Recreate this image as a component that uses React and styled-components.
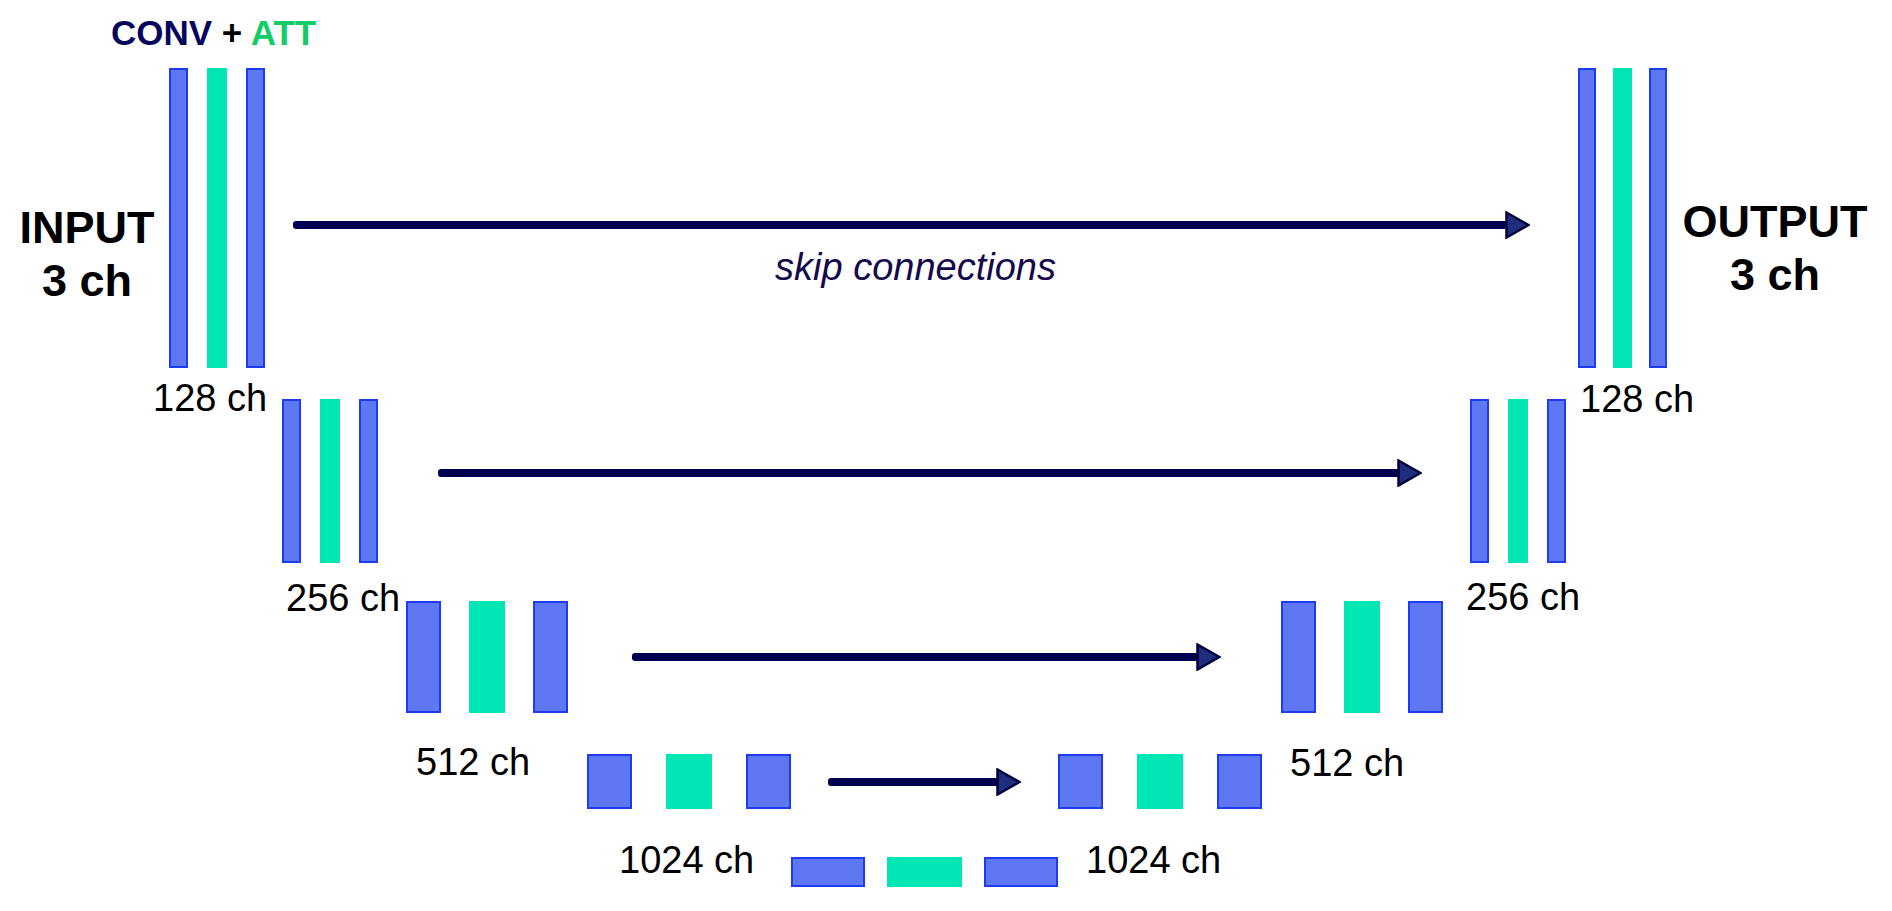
import React from "react";
import styled, { createGlobalStyle } from "styled-components";

const GlobalStyle = createGlobalStyle`
  html, body { margin: 0; padding: 0; background: #ffffff; }
  #root { width: 1892px; height: 911px; }
`;

const Canvas = styled.div`
  position: relative;
  width: 1892px;
  height: 911px;
  background: #ffffff;
  overflow: hidden;
  font-family: "Liberation Sans", Arial, sans-serif;
  color: #000;
`;

/* Diagram nodes: their place on the canvas is the content itself */
const Node = styled.div`
  position: absolute;
  left: ${(p) => p.$x}px;
  top: ${(p) => p.$y}px;
`;

const BarGroup = styled(Node)`
  display: flex;
  flex-direction: row;
  gap: ${(p) => p.$gap}px;
  height: ${(p) => p.$h}px;
`;

const Bar = styled.div`
  box-sizing: border-box;
  width: ${(p) => p.$w}px;
  height: 100%;
  background: ${(p) => (p.$att ? "#00e6b4" : "#5d78f2")};
  border: ${(p) => (p.$att ? "none" : "2px solid #1d3cf0")};
`;

const ArrowNode = styled(Node)`
  display: flex;
  flex-direction: row;
  align-items: center;
  width: ${(p) => p.$w}px;
  height: 28px;
`;

const Shaft = styled.div`
  flex: 1;
  height: 8px;
  background: #000050;
  border-radius: 3px;
  margin-right: -3px;
`;

const Head = styled.svg`
  display: block;
  width: 25px;
  height: 28px;
  flex: none;
`;

const ChLabel = styled(Node)`
  font-size: 38px;
  line-height: 38px;
  white-space: nowrap;
`;

const IOLabel = styled(Node)`
  width: ${(p) => p.$w}px;
  font-size: 45px;
  font-weight: 700;
  line-height: 53px;
  text-align: center;
  white-space: nowrap;
`;

const Legend = styled(Node)`
  font-size: 35px;
  font-weight: 700;
  line-height: 40px;
  white-space: nowrap;
`;

const Conv = styled.span`
  color: #06065e;
`;

const Att = styled.span`
  color: #12cc66;
`;

const SkipText = styled(Node)`
  font-size: 38px;
  font-style: italic;
  line-height: 38px;
  color: #150a4c;
  white-space: nowrap;
`;

const groups = [
  { x: 169, y: 68, w: 19, gap: 19, h: 300 },
  { x: 1578, y: 68, w: 18, gap: 17, h: 300 },
  { x: 282, y: 399, w: 19, gap: 19, h: 164 },
  { x: 1470, y: 399, w: 19, gap: 19, h: 164 },
  { x: 406, y: 601, w: 35, gap: 28, h: 112 },
  { x: 1281, y: 601, w: 35, gap: 28, h: 112 },
  { x: 587, y: 754, w: 45, gap: 34, h: 55 },
  { x: 1058, y: 754, w: 45, gap: 34, h: 55 },
  { x: 791, y: 857, w: 74, gap: 22, h: 30 },
];

const arrows = [
  { x1: 293, x2: 1530, y: 225 },
  { x1: 438, x2: 1422, y: 473 },
  { x1: 632, x2: 1221, y: 657 },
  { x1: 828, x2: 1021, y: 782 },
];

const labels = [
  { x: 153, y: 379, t: "128 ch" },
  { x: 1580, y: 380, t: "128 ch" },
  { x: 286, y: 579, t: "256 ch" },
  { x: 1466, y: 578, t: "256 ch" },
  { x: 416, y: 743, t: "512 ch" },
  { x: 1290, y: 744, t: "512 ch" },
  { x: 619, y: 841, t: "1024 ch" },
  { x: 1086, y: 841, t: "1024 ch" },
];

function Block({ g }) {
  return (
    <BarGroup $x={g.x} $y={g.y} $gap={g.gap} $h={g.h}>
      <Bar $w={g.w} />
      <Bar $w={g.w + 1} $att />
      <Bar $w={g.w} />
    </BarGroup>
  );
}

function Arrow({ a }) {
  return (
    <ArrowNode $x={a.x1} $y={a.y - 14} $w={a.x2 - a.x1}>
      <Shaft />
      <Head viewBox="0 0 25 28">
        <polygon
          points="1.5,1.5 23.5,14 1.5,26.5"
          fill="#1e2e7c"
          stroke="#00003c"
          strokeWidth="2.5"
          strokeLinejoin="miter"
        />
      </Head>
    </ArrowNode>
  );
}

export default function App() {
  return (
    <>
      <GlobalStyle />
      <Canvas>
        <Legend $x={111} $y={13}>
          <Conv>CONV</Conv> + <Att>ATT</Att>
        </Legend>

        <IOLabel $x={0} $y={201} $w={174}>
          INPUT
          <br />3 ch
        </IOLabel>
        <IOLabel $x={1680} $y={195} $w={190}>
          OUTPUT
          <br />3 ch
        </IOLabel>

        {groups.map((g, i) => (
          <Block key={i} g={g} />
        ))}

        {arrows.map((a, i) => (
          <Arrow key={i} a={a} />
        ))}

        <SkipText $x={775} $y={248}>skip connections</SkipText>

        {labels.map((l, i) => (
          <ChLabel key={i} $x={l.x} $y={l.y}>
            {l.t}
          </ChLabel>
        ))}
      </Canvas>
    </>
  );
}
